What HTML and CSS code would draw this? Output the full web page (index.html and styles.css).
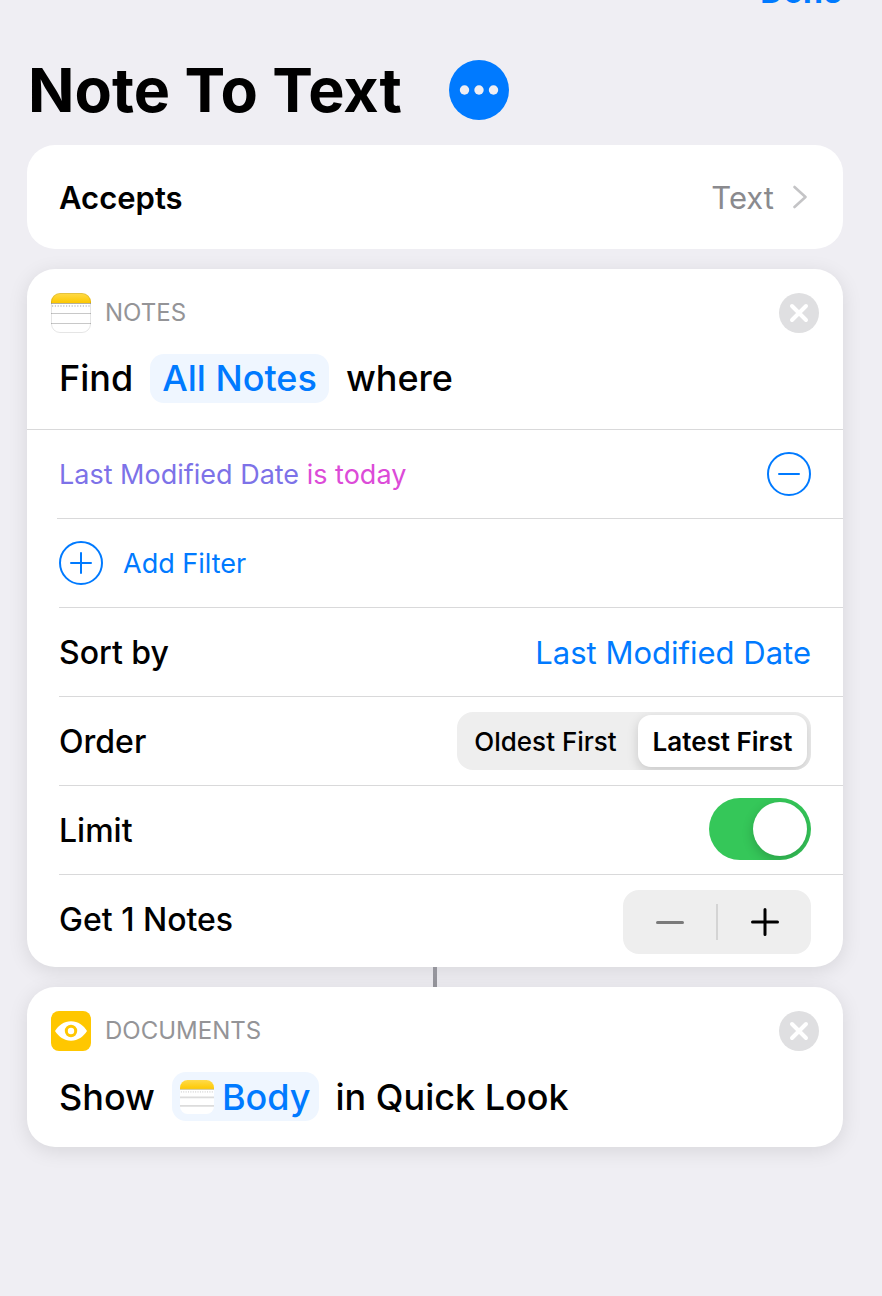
FILE: index.html
```html
<!DOCTYPE html>
<html lang="en">
<head>
<meta charset="utf-8">
<title>Note To Text</title>
<link rel="stylesheet" href="styles.css">
</head>
<body>
<nav class="topbar"><button class="done" type="button">Done</button></nav>
<main class="editor">
  <header class="title-row">
    <h1 class="title">Note To Text</h1>
    <button class="more" type="button" aria-label="More options">
      <svg width="60" height="60" viewBox="0 0 60 60"><circle cx="30" cy="30" r="30" fill="#007aff"/><g fill="#efeef3"><circle cx="15.500" cy="30" r="4.700"/><circle cx="30" cy="30" r="4.700"/><circle cx="44.500" cy="30" r="4.700"/></g></svg>
    </button>
  </header>

  <button class="card accepts" type="button">
    <span class="accepts-label">Accepts</span>
    <span class="accepts-value">Text
      <svg width="14" height="24" viewBox="0 0 14 24"><path d="M1.500 2l11 10-11 10" fill="none" stroke="#c4c4c6" stroke-width="2.600" stroke-linecap="round" stroke-linejoin="round"/></svg>
    </span>
  </button>

  <section class="card action">
    <div class="action-head">
      <svg class="app-icon" width="40" height="40" viewBox="0 0 40 40">
        <defs><linearGradient id="gold" x1="0" y1="0" x2="0" y2="1"><stop offset="0" stop-color="#ffdb4b"/><stop offset="1" stop-color="#fdc800"/></linearGradient><clipPath id="tile"><rect width="40" height="40" rx="9"/></clipPath></defs>
        <g clip-path="url(#tile)"><rect width="40" height="40" fill="#fff"/><rect width="40" height="10" fill="url(#gold)"/><path d="M0 10.500h40" stroke="#b3ae9c"/><path d="M1 13h38" stroke="#d0d0d0" stroke-width="2" stroke-dasharray="1.200 1.600"/><path d="M0 20.500h40M0 30.500h40" stroke="#c8c8c8"/></g>
        <rect x=".5" y=".5" width="39" height="39" rx="8.500" fill="none" stroke="#000" stroke-opacity=".1"/>
      </svg>
      <h2 class="app-name">NOTES</h2>
      <button class="close" type="button" aria-label="Remove Find Notes"><svg width="40" height="40" viewBox="0 0 40 40"><circle cx="20" cy="20" r="20" fill="#dfdfe1"/><path d="M13 13l14 14M27 13L13 27" stroke="#fff" stroke-width="4" stroke-linecap="round"/></svg></button>
    </div>
    <p class="sentence">Find <button class="token" type="button">All Notes</button> where</p>
    <div class="rule"></div>
    <div class="row first">
      <button class="filter" type="button">Last Modified Date <span class="condition">is today</span></button>
      <button class="round" type="button" aria-label="Remove filter"><svg width="44" height="44" viewBox="0 0 44 44" fill="none" stroke="#007aff" stroke-width="2"><circle cx="22" cy="22" r="21"/><path d="M12 22h20" stroke-linecap="round"/></svg></button>
    </div>
    <div class="row">
      <button class="add" type="button"><svg width="44" height="44" viewBox="0 0 44 44" fill="none" stroke="#007aff" stroke-width="2"><circle cx="22" cy="22" r="21"/><path d="M12 22h20M22 12v20" stroke-linecap="round"/></svg>Add Filter</button>
    </div>
    <div class="row"><span class="label">Sort by</span><button class="sort" type="button">Last Modified Date</button></div>
    <div class="row">
      <span class="label" id="order-label">Order</span>
      <div class="segments" role="radiogroup" aria-labelledby="order-label">
        <label class="segment"><input type="radio" name="order"><span>Oldest First</span></label>
        <label class="segment"><input type="radio" name="order" checked><span>Latest First</span></label>
      </div>
    </div>
    <div class="row"><label class="label" for="limit">Limit</label><input class="switch" id="limit" type="checkbox" role="switch" checked></div>
    <div class="row last">
      <span class="label">Get 1 Notes</span>
      <div class="stepper">
        <button type="button" aria-label="Decrease"><svg width="28" height="28" viewBox="0 0 28 28"><path d="M1.500 14.500h25" stroke="#7a7a7a" stroke-width="3" stroke-linecap="round"/></svg></button>
        <span class="divider"></span>
        <button type="button" aria-label="Increase"><svg width="28" height="28" viewBox="0 0 28 28"><path d="M1.500 14h25M14 1.500v25" stroke="#000" stroke-width="3" stroke-linecap="round"/></svg></button>
      </div>
    </div>
  </section>
  <div class="connector"></div>
  <section class="card action">
    <div class="action-head">
      <svg class="app-icon" width="40" height="40" viewBox="0 0 40 40"><rect width="40" height="40" rx="8" fill="#ffc700"/><path d="M4 20C7.500 14.500 13 10.300 20 10.300S32.500 14.500 36 20C32.500 25.500 27 29.700 20 29.700S7.500 25.500 4 20z" fill="#fff"/><circle cx="20" cy="20" r="4.700" fill="none" stroke="#ffc700" stroke-width="3"/></svg>
      <h2 class="app-name">DOCUMENTS</h2>
      <button class="close" type="button" aria-label="Remove Quick Look"><svg width="40" height="40" viewBox="0 0 40 40"><circle cx="20" cy="20" r="20" fill="#dfdfe1"/><path d="M13 13l14 14M27 13L13 27" stroke="#fff" stroke-width="4" stroke-linecap="round"/></svg></button>
    </div>
    <p class="sentence end">Show <button class="token with-icon" type="button"><svg width="34" height="34" viewBox="0 0 40 40"><g clip-path="url(#tile)"><rect width="40" height="40" fill="#fff"/><rect width="40" height="11" fill="url(#gold)"/><path d="M0 11h40" stroke="#c9c2a4"/><path d="M1 14h38" stroke="#dedede" stroke-width="2" stroke-dasharray="1.200 1.600"/><path d="M0 20.500h40M0 30.500h40" stroke="#dcdcdc" stroke-width="2"/></g></svg>Body</button> in Quick Look</p>
  </section>
</main>
</body>
</html>
```
FILE: styles.css
```css
* { box-sizing: border-box; }
body { margin: 0; min-height: 100vh; background: #efeef3; color: #000; font-family: Inter, "Liberation Sans", sans-serif; overflow-x: hidden; }
button { border: 0; padding: 0; background: none; color: inherit; font: inherit; cursor: pointer; }
svg { display: block; flex: none; }
h1, h2, p { margin: 0; font-weight: 400; }

.topbar { display: flex; justify-content: flex-end; align-items: flex-end; height: 12px; padding-right: 40px; overflow: hidden; }
.done { color: #007aff; font-size: 32px; line-height: 40px; font-weight: 700; }
.editor { padding: 48px 39px 0 27px; }
.title-row { display: flex; align-items: center; gap: 47px; height: 60px; margin-bottom: 25px; }
.title { padding-left: 1px; font-size: 61px; line-height: 60px; font-weight: 700; white-space: nowrap; }
.card { display: block; width: 100%; background: #fff; border-radius: 28px; }
.accepts { display: flex; align-items: center; justify-content: space-between; height: 104px; padding: 0 36px 0 32px; margin-bottom: 20px; font-size: 31px; }
.accepts-label { font-weight: 600; }
.accepts-value { display: flex; align-items: center; gap: 19px; color: #8a8a8e; }
.action { box-shadow: 0 4px 20px rgba(0, 0, 0, 0.1); }
.action-head { display: flex; align-items: center; gap: 14px; padding: 24px 24px 0; }
.app-name { flex: 1; color: #949497; font-size: 24px; line-height: 40px; }
.sentence { display: flex; align-items: center; gap: 17px; height: 48px; margin-top: 21px; padding: 0 32px; font-size: 36px; font-weight: 500; white-space: nowrap; }
.sentence.end { height: 75px; padding-bottom: 26px; }
.token { height: 49px; padding: 0 12px; border-radius: 14px; background: #eff6ff; color: #007aff; }
.with-icon { display: flex; align-items: center; gap: 8px; padding: 0 8px; }
.rule { height: 1px; margin-top: 27px; background: #d9d9da; }
.row { display: flex; align-items: center; justify-content: space-between; height: 89px; margin-left: 32px; padding-right: 32px; border-bottom: 1px solid #d9d9da; font-size: 32px; }
.row.first { margin-left: 30px; padding-left: 2px; }
.row.last { height: 92px; padding-bottom: 4px; border: 0; }
.label { font-weight: 500; }
.filter { color: #7d72e8; font-size: 27px; }
.condition { color: #dc4bd8; }
.add { display: flex; align-items: center; gap: 20px; color: #007aff; font-size: 27px; }
.sort { color: #007aff; font-size: 31px; }
.segments { display: grid; grid-template-columns: 1fr 1fr; width: 354px; height: 58px; border-radius: 16px; background: #eeeeee; overflow: hidden; }
.segment { display: flex; padding: 3px 4px; cursor: pointer; font-size: 26px; font-weight: 500; }
.segment input { position: absolute; opacity: 0; }
.segment span { display: flex; flex: 1; align-items: center; justify-content: center; border-radius: 13px; }
.segment input:checked + span { background: #fff; font-weight: 600; box-shadow: 0 4px 12px rgba(0, 0, 0, 0.16); }
.switch { appearance: none; display: flex; width: 102px; height: 62px; margin: 0 0 2px; padding: 4px; border-radius: 31px; background: #d8d8dc; overflow: hidden; cursor: pointer; }
.switch::before { content: ""; width: 54px; height: 54px; border-radius: 50%; background: #fff; box-shadow: 0 4px 12px rgba(0, 0, 0, 0.2); }
.switch:checked { justify-content: flex-end; background: #35c759; }
.stepper { display: flex; align-items: center; height: 64px; margin-top: 6px; border-radius: 16px; background: #eeeeee; }
.stepper button { display: grid; place-items: center; width: 93px; height: 64px; }
.divider { width: 2px; height: 36px; background: #d4d4d4; }
.connector { width: 4px; height: 20px; margin: 0 auto; background: #96969d; }
```
